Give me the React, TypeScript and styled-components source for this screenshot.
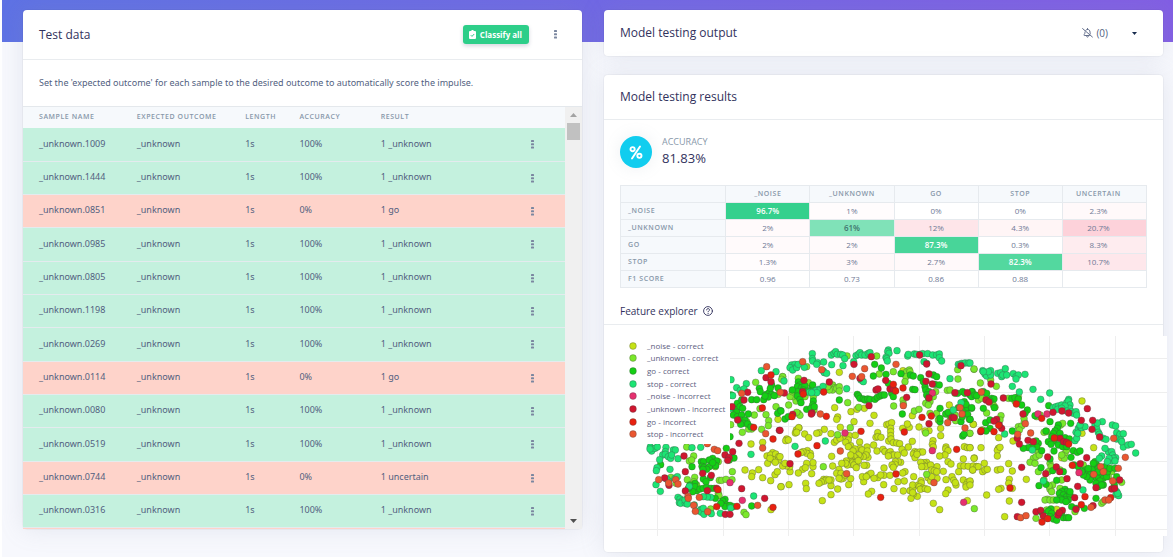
import React from "react";
import styled, { createGlobalStyle, css } from "styled-components";

const Global = createGlobalStyle`
  *, *::before, *::after { box-sizing: border-box; }
  html { background: #fff; }
  body {
    margin: 0;
    font-family: "Open Sans", "Noto Sans", sans-serif;
    font-size: 10px;
    line-height: 16px;
    color: #525f7f;
  }
  button { font: inherit; border: 0; padding: 0; background: none; cursor: pointer; }
  h1, h2, h3, p { margin: 0; }
`;

const Page = styled.main`
  margin-left: 2px;
  min-height: 100vh;
  padding: 10px 10px 5px 21px;
  background: linear-gradient(87deg, #5e72e4, #825ee4) top / 100% 42px no-repeat, #f7f8fd;
  display: grid;
  grid-template-columns: minmax(0, 1fr) minmax(0, 1fr);
  gap: 22px;
  align-items: start;
`;

const Column = styled.div`
  display: flex;
  flex-direction: column;
  gap: 19px;
`;

const Card = styled.section`
  background: #fff;
  border-radius: 4px;
  box-shadow: 0 0 0 1px rgba(0, 0, 0, 0.03), 0 0 24px rgba(136, 152, 170, 0.18);
`;

const CardHeader = styled.header<{ $height: number; $plain?: boolean }>`
  display: flex;
  align-items: center;
  height: ${(p) => p.$height}px;
  padding: 0 16px;
  ${(p) => !p.$plain && css`border-bottom: 1px solid #e9ecef;`}
`;

const Title = styled.h2`
  flex: 1;
  font-size: 12px;
  font-weight: 500;
  color: #32325d;
`;

const ClassifyButton = styled.button`
  display: flex;
  align-items: center;
  gap: 4px;
  height: 19px;
  padding: 0 7px 0 6px;
  border-radius: 3px;
  background: #2dce89;
  color: #fff;
  font-size: 8px;
  font-weight: 700;
  box-shadow: 0 2px 4px rgba(50, 50, 93, 0.2);
`;

const DotsButton = styled.button`
  display: flex;
  align-items: center;
  justify-content: center;
  width: 12px;
  height: 16px;
  color: #7b87a0;
`;

const HeaderDots = styled(DotsButton)`
  margin: 0 5px 0 20px;
`;

const Intro = styled.p`
  height: 46px;
  padding: 0 16px;
  line-height: 46px;
  font-family: "Noto Sans", "Open Sans", sans-serif;
  font-size: 9px;
`;

const SampleArea = styled.div`
  display: flex;
  height: 423px;
  border-top: 1px solid #e4e8ec;
`;

const SampleViewport = styled.div`
  flex: 1;
  min-width: 0;
  overflow-y: auto;
  scrollbar-width: none;
`;

const SampleTable = styled.table`
  width: 100%;
  table-layout: fixed;
  border-collapse: separate;
  border-spacing: 0;
  th, td { padding: 0 0 2px; text-align: left; white-space: nowrap; }
  th:first-child, td:first-child { padding-left: 16px; }
  th {
    height: 21px;
    background: #f6f9fc;
    color: #8898aa;
    font-size: 7px;
    font-weight: 600;
    line-height: 12px;
    letter-spacing: 0.08em;
  }
`;

const SampleRow = styled.tr<{ $ok: boolean }>`
  height: 33px;
  background: ${(p) => (p.$ok ? "#c4f1de" : "#fed3ca")};
  &:nth-child(3n + 1) { height: 34px; }
  td {
    border-bottom: 1px solid #e4ebee;
    font-family: "Noto Sans", "Open Sans", sans-serif;
    font-size: 9px;
  }
  td:last-child { padding-bottom: 0; }
`;

const ScrollTrack = styled.div`
  display: flex;
  flex-direction: column;
  align-items: center;
  width: 17px;
  background: #f0f0f0;
`;

const ScrollArrow = styled.button`
  display: flex;
  align-items: center;
  justify-content: center;
  width: 17px;
  height: 16px;
`;

const ScrollThumb = styled.div`
  flex: 1;
  &::before {
    content: "";
    display: block;
    width: 13px;
    height: 17px;
    background: #c1c1c1;
  }
`;

const BellButton = styled.button`
  display: flex;
  align-items: center;
  gap: 3px;
  font-size: 10px;
  color: #525f7f;
`;

const Caret = styled.button`
  display: flex;
  margin: 0 6px 0 20px;
  padding: 4px;
`;

const Results = styled.div`
  padding: 16px 16px 0;
`;

const Score = styled.div`
  display: flex;
  align-items: center;
  gap: 10px;
  height: 32px;
`;

const ScoreIcon = styled.div`
  display: grid;
  place-items: center;
  width: 32px;
  height: 32px;
  border-radius: 50%;
  background: #11cdef;
  box-shadow: 0 0 16px rgba(136, 152, 170, 0.15);
`;

const ScoreText = styled.div`
  padding-bottom: 2px;
`;

const ScoreLabel = styled.p`
  font-size: 9px;
  line-height: 14px;
  color: #8898aa;
`;

const ScoreValue = styled.p`
  font-size: 13px;
  line-height: 18px;
  font-weight: 500;
  color: #32325d;
`;

const Matrix = styled.table`
  width: 100%;
  margin-top: 17px;
  table-layout: fixed;
  border-collapse: collapse;
  th, td {
    height: 17px;
    padding: 0;
    border: 1px solid #e6eaee;
    font-size: 8px;
    line-height: 12px;
    text-align: center;
  }
  th {
    background: #f6f9fc;
    color: #8898aa;
    font-size: 7px;
    font-weight: 600;
    letter-spacing: 0.08em;
  }
  th[scope="row"] { text-align: left; padding-left: 7px; }
  th:last-child, td:last-child { padding-right: 12px; }
`;

type Tone = { bg?: string; fg?: string; bold?: boolean };

const MatrixCell = styled.td<{ $tone: Tone }>`
  background: ${(p) => p.$tone.bg ?? "#fff"};
  color: ${(p) => p.$tone.fg ?? "#6f7a96"};
  font-weight: ${(p) => (p.$tone.bold ? 600 : 400)};
`;

const ExplorerTitle = styled.h3`
  display: flex;
  align-items: center;
  gap: 5px;
  height: 37px;
  padding: 10px 16px 0;
  border-bottom: 1px solid #e9ecef;
  font-size: 10px;
  font-weight: 500;
  color: #32325d;
`;

const PlotArea = styled.div`
  padding: 11px 0 16px 16px;
  margin-right: -4px;
`;

const Plot = styled.svg`
  display: block;
  width: 100%;
  height: auto;
  background: #fff;
`;

const Dots = () => (
  <svg width="3" height="9" viewBox="0 0 3 9" fill="currentColor" aria-hidden="true">
    <rect width="3" height="2" rx="0.6" />
    <rect y="3.3" width="3" height="2" rx="0.6" />
    <rect y="6.6" width="3" height="2" rx="0.6" />
  </svg>
);

const samples: [string, boolean, string][] = [
  ["1009", true, "_unknown"],
  ["1444", true, "_unknown"],
  ["0851", false, "go"],
  ["0985", true, "_unknown"],
  ["0805", true, "_unknown"],
  ["1198", true, "_unknown"],
  ["0269", true, "_unknown"],
  ["0114", false, "go"],
  ["0080", true, "_unknown"],
  ["0519", true, "_unknown"],
  ["0744", false, "uncertain"],
  ["0316", true, "_unknown"],
];

const classes = ["_NOISE", "_UNKNOWN", "GO", "STOP", "UNCERTAIN"];

const hit = (bg: string): Tone => ({ bg, fg: "#fff", bold: true });
const miss = (bg: string): Tone => ({ bg });

const matrix: { label: string; cells: [string, Tone][] }[] = [
  { label: "_NOISE", cells: [["96.7%", hit("#34d08d")], ["1%", miss("#fffcfd")], ["0%", {}], ["0%", {}], ["2.3%", miss("#fff9fa")]] },
  { label: "_UNKNOWN", cells: [["2%", miss("#fffafb")], ["61%", { bg: "#80e2b8", fg: "#40756f", bold: true }], ["12%", miss("#fee5e9")], ["4.3%", miss("#fff5f6")], ["20.7%", miss("#fdd2da")]] },
  { label: "GO", cells: [["2%", miss("#fffafb")], ["2%", miss("#fffafb")], ["87.3%", hit("#48d599")], ["0.3%", {}], ["8.3%", miss("#feecef")]] },
  { label: "STOP", cells: [["1.3%", miss("#fffcfd")], ["3%", miss("#fff8f9")], ["2.7%", miss("#fff9fa")], ["82.3%", hit("#53d89f")], ["10.7%", miss("#fee7eb")]] },
  { label: "F1 SCORE", cells: [["0.96", {}], ["0.73", {}], ["0.86", {}], ["0.88", {}], ["", {}]] },
];

/* Each series lists its points for the left, middle and right part of the
   plot, in thirds of a pixel from that part's own origin. */
const origins = [-20, 160, 350];

const series: { name: string; color: string; parts: [string, string, string] }[] = [
  {
    name: "_noise - correct",
    color: "#c5e216",
    parts: [
      "534,283 453,357 488,352 518,383 501,393 512,390 527,387 536,395 503,415 520,405 536,405 510,400 526,412 435,435 457,444 455,455 476,434 488,458 525,449 532,440 512,467 543,485 513,554",
      "178,142 369,137 164,248 173,276 170,283 213,260 231,253 253,250 222,290 282,271 270,295 320,299 327,297 335,293 332,310 57,309 49,315 46,324 74,327 86,338 133,313 117,323 110,325 20,342 17,347 25,345 56,308 50,322 153,326 181,307 163,352 170,345 180,340 198,335 208,332 226,331 205,345 197,352 212,362 205,365 239,351 293,323 288,337 294,335 303,337 332,320 332,332 326,348 333,342 340,353 350,354 359,356 281,360 261,366 240,370 246,375 262,378 225,372 219,378 291,378 309,373 315,380 326,385 331,380 335,390 342,390 353,390 325,393 366,373 373,384 385,366 397,349 404,380 400,387 405,398 412,382 420,381 428,381 411,388 368,310 388,307 397,272 417,306 382,297 447,317 482,310 482,332 459,347 457,358 460,366 435,318 498,366 497,372 504,377 495,390 479,393 508,240 553,365 562,368 570,368 580,298 550,402 583,399 541,423 552,423 565,424 590,425 578,435 536,440 504,410 513,417 490,439 516,455 498,464 521,466 528,480 526,473 504,495 497,506 550,465 570,470 563,472 558,480 558,486 562,527 479,554 460,535 412,514 400,507 393,520 390,497 398,490 398,503 398,480 401,455 423,467 415,480 424,474 418,485 428,490 421,493 436,491 443,493 444,458 452,468 471,460 455,455 471,425 440,412 432,413 430,420 422,412 436,425 425,425 452,420 455,435 463,437 470,440 362,412 355,410 346,410 345,418 336,420 340,427 312,429 312,451 330,451 311,479 342,491 370,498 354,470 373,468 375,440 368,444 294,458 302,450 275,499 265,507 251,470 247,455 265,450 273,445 259,455 282,460 264,397 258,390 250,395 240,395 236,390 228,400 222,395 213,400 215,410 212,418 218,413 228,412 229,420 222,420 229,428 235,407 260,421 252,421 199,408 212,390 155,394 177,433 170,445 183,445 190,460 183,462 177,460 196,450 212,461 206,479 202,420 197,415 185,415 173,492 153,509 153,482 153,465 158,423 127,527 131,463 139,463 134,468 147,465 124,471 117,475 77,475 79,491 95,446 99,425 99,413 80,415 68,433 76,428 55,444 27,479 3,485 30,440 29,425 20,423 8,423 15,415 0,395 82,377 91,385 80,385 92,393 69,380 63,383",
      "10,298 86,338 33,368 0,368 12,400 85,370 82,376 90,367 82,393 43,415 10,423 20,425 25,425 8,435 38,440 45,435 52,433 82,435 92,433 116,416 127,438 118,463 116,475 127,490 93,490 86,493 50,510 118,528 0,468 0,480 169,463 104,575 371,368 336,325 336,228 129,348 260,553 275,398",
    ],
  },
  {
    name: "_unknown - correct",
    color: "#7ae82a",
    parts: [
      "467,172 548,155 392,299 480,251 463,270 498,269 506,287 505,302 485,313 427,322 440,290 455,312 411,252 528,245 446,312 535,208 281,393 268,408 260,366 397,440 396,464 358,466 365,466 378,463 262,464 284,457 282,470 355,410 213,457 346,425 275,405 355,505 432,562 438,569 332,552 357,512 290,480 228,475",
      "8,155 5,163 85,173 26,240 48,228 38,215 30,215 37,200 55,265 60,271 50,262 80,125 201,93 290,93 260,90 158,180 165,188 158,195 170,190 148,195 143,185 178,185 178,198 203,233 236,247 102,255 75,215 100,215 298,147 369,225 370,237 341,243 375,148 380,140 388,135 390,140 378,155 375,170 340,140 403,258 417,253 437,235 450,230 460,215 445,240 470,265 467,200 502,196 510,195 534,162 533,134 582,133 525,205 525,270 527,287 558,263 568,283 569,325 437,324 173,329 211,308 130,425 440,448 583,551 475,285 510,275 55,160 450,265",
      "31,174 79,184 62,165 25,225 35,220 50,220 115,220 70,240 75,247 50,264 93,272 37,315 90,285 145,305 155,303 163,290 148,315 145,215 135,228 200,275 222,322 230,320 272,300 278,295 285,385 290,375 283,400 275,390 200,370 205,380 190,400 180,412 195,415 198,395 208,390 240,415 243,425 235,440 248,480 240,493 237,483 245,500 232,523 225,525 240,525 250,525 198,580 395,535 400,530 455,472 315,560 230,555 205,440 270,490 340,420 270,435 425,440 415,455 437,465 275,465 210,270 222,465 0,325 162,280 12,132",
    ],
  },
  {
    name: "go - correct",
    color: "#14cf14",
    parts: [
      "393,210 400,250 412,235 425,225 420,245 428,250 410,262 400,270 412,275 425,270 420,285 435,285 445,267 430,295 422,298 443,297 453,306 455,224 470,224 478,190 481,200 491,224 499,208 508,202 515,208 505,216 523,212 495,213 534,189 515,180 511,190 541,257 533,265 390,335 379,370 182,419 276,425 304,410 311,410 306,424 312,427 338,400 328,405 350,408 335,420 347,422 328,425 320,433 309,433 338,413 402,399 310,462 331,458 285,475 270,480 275,490 290,497 285,485 300,492 310,490 320,487 333,490 343,490 278,500 265,490 375,523 368,528 380,540 375,545 390,541 455,543 400,545 362,535 346,520 388,405 318,470",
      "3,258 15,282 25,275 55,171 60,180 52,185 65,188 75,183 53,200 70,195 80,200 52,213 60,223 63,233 95,190 98,180 100,228 98,240 80,253 93,250 103,245 37,195 178,225 232,208 236,213 240,220 250,222 255,225 263,222 270,223 285,223 292,217 300,213 306,210 313,210 280,153 284,118 304,129 318,148 325,175 335,205 363,146 367,267 391,150 400,153 398,193 405,194 422,158 435,185 437,195 447,200 440,210 450,208 445,218 460,150 470,155 465,178 478,180 430,170 480,250 480,290 480,280 497,267 513,273 505,262 535,248 555,250 563,248 575,250 553,230 558,238 570,283 563,268 543,290 548,333 552,328 533,205 548,200 555,205 577,200 570,210 340,215 547,275",
      "5,200 5,215 15,210 20,212 40,200 50,205 65,220 72,222 60,228 40,250 73,248 5,248 0,283 47,293 60,285 60,310 48,318 127,318 125,220 135,218 145,222 155,240 172,255 165,265 195,272 236,242 228,318 240,290 265,300 262,310 255,318 250,325 270,325 245,335 260,340 275,340 285,338 250,348 235,350 243,358 265,360 278,365 290,365 302,295 298,342 252,378 215,377 205,355 200,365 185,365 175,368 160,370 198,348 310,377 322,382 330,378 303,397 312,420 240,402 248,437 213,428 280,440 325,425 345,435 350,440 355,445 365,440 360,450 370,430 380,420 370,455 380,460 385,455 385,430 395,445 400,460 390,468 378,475 375,410 370,415 405,425 400,480 410,455 385,440 413,440 420,430 435,430 440,455 360,465 355,430 350,455 340,450 335,440 260,466 207,482 228,478 285,493 290,500 275,500 268,505 280,510 290,515 300,510 295,525 285,525 270,520 300,500 275,525 288,530 305,545 260,525 378,520 343,550 318,550 243,552 235,558 245,565 240,575 250,582 260,586 280,578 290,578 296,578 275,562 215,562 385,485 395,480 433,480",
    ],
  },
  {
    name: "stop - correct",
    color: "#1ce574",
    parts: [
      "484,137 528,140 393,164 439,176 410,188 421,196 432,192 398,212 390,250 151,366 158,372 155,378 165,370 172,366 150,372 198,367 220,375 196,380 226,375 188,390 196,388 205,395 212,400 215,390 234,401 179,404 171,428 169,437 210,433 276,368 302,367 168,479 181,499 206,468 200,462 225,460 232,455 268,484 234,517 240,522 238,533 248,527 242,535 256,535 260,530 255,525 262,537 283,540 303,553 298,558 305,562 312,568 334,566 310,550 332,517 322,516 310,515 361,565 392,549 453,388 461,513",
      "35,120 45,118 40,130 30,128 38,135 50,128 55,118 73,127 97,86 97,101 98,108 113,113 110,118 131,111 155,119 154,90 162,85 167,80 172,88 182,88 188,90 194,101 189,122 200,191 228,92 235,88 240,83 245,90 255,90 265,85 270,83 221,110 325,75 323,80 327,85 351,77 318,97 320,101 322,108 383,93 385,88 403,87 410,88 420,88 428,86 443,86 458,90 470,90 478,87 478,98 485,108 432,110 440,115 130,138 133,143 140,145 12,168 88,202 100,200 115,193 108,197 120,195 129,184 110,203 95,203 243,165 250,170 45,364 136,348 510,161 535,118 545,115 555,114 565,114 540,120 543,233 520,255",
      "0,114 38,137 45,148 50,153 62,137 62,150 55,140 40,140 83,145 92,143 106,131 95,155 98,150 110,150 130,146 138,155 145,150 138,162 165,148 127,184 148,201 189,193 239,204 212,223 250,248 258,245 265,243 263,253 275,240 290,233 296,223 295,228 300,240 298,250 285,243 305,260 310,265 318,260 320,270 290,258 275,250 187,375 104,327 220,468 315,347 320,340 318,322 325,310 330,305 335,308 345,305 323,325 330,300 375,300 380,310 385,322 397,290 427,300 437,303 388,328 400,340 408,343 440,323 447,335 450,328 460,326 440,342 453,345 460,366 455,350 474,360 484,358 497,384 415,380 425,380 428,390 437,398 430,400 425,408 405,370 395,393 388,400 417,400 412,410 435,408 440,500 438,508 446,512 339,495 443,505 382,294",
    ],
  },
  {
    name: "_noise - incorrect",
    color: "#e6306f",
    parts: ["390,473 427,526", "195,324 457,204 457,377 551,532", "204,267 231,267 327,443"],
  },
  {
    name: "_unknown - incorrect",
    color: "#d0162f",
    parts: [
      "498,158 513,170 443,202 432,225 396,245 413,285 538,316 417,355 398,380 375,390 387,397 383,406 252,393 256,440 308,445 334,451 194,459 207,481 256,498 322,497 425,491 494,520 376,568 390,568 350,490",
      "222,118 274,95 419,90 440,117 447,147 438,169 457,177 543,122 525,203 562,203 447,219 447,296 317,166 380,217 267,242 288,195 294,192 330,192 340,192 240,160 148,171 72,166 68,200 13,204 38,268 96,264 94,267 30,416 0,316 516,278 522,278",
      "63,177 48,225 57,231 100,219 159,267 249,262 276,258 296,264 352,251 334,286 368,286 366,313 389,336 80,283 72,288 95,310 32,320 142,340 148,357 174,346 190,350 233,396 227,446 259,426 269,440 291,461 331,416 350,398 323,484 378,488 155,427 155,532 142,575 198,560 212,556 220,573 264,570 277,556 268,563 318,553 314,518 449,465 425,492 434,490 369,542 270,340 281,350 290,352 88,300",
    ],
  },
  {
    name: "go - incorrect",
    color: "#e8200f",
    parts: [
      "513,150 487,249 461,307 519,342 354,494 350,545 411,544 519,547",
      "131,201 70,207 36,275 139,274 54,387 111,362 243,319 373,321 369,189 340,178 347,198 426,277 454,273 348,447 302,517 530,373",
      "139,237 215,280 86,301 72,320 33,317 253,339 296,357 307,421 120,489 345,515 334,539 422,518 216,591 233,581",
    ],
  },
  {
    name: "stop - incorrect",
    color: "#ea5630",
    parts: [
      "500,125 425,205 541,202 497,326 488,369 322,356 343,373 353,377 176,464 206,474 227,464 234,477 264,514 265,520 298,517 281,541 286,559 323,560 473,541",
      "68,110 125,134 254,131 348,118 217,154 245,155 121,267 370,242 503,293 540,248 546,267 555,309 181,378 200,446 462,473",
      "34,201 166,296 143,328 182,324 431,340 466,397 445,430 392,425 400,440 371,448 428,468 152,578 168,572 363,547 405,525 416,525",
    ],
  },
];

const parse = (part: string, origin: number) =>
  part.split(" ").map((pair) => {
    const [x, y] = pair.split(",").map(Number);
    return { x: origin + x / 3, y: y / 3 - 11 };
  });

const gridX = [37, 103, 168, 233, 299, 364, 429, 495];
const gridY = [22, 56, 90, 125, 159, 193];
const legendY = [10, 22, 35, 48, 60, 73, 86, 98];

const marker = { stroke: "#444", strokeOpacity: 0.55, strokeWidth: 0.6 };

const FeaturePlot = () => (
  <Plot viewBox="0 0 547 200" role="img" aria-label="Feature explorer">
    <g stroke="#eeeeee" strokeWidth="1">
      {gridX.map((x) => <line key={x} x1={x + 0.5} x2={x + 0.5} y1="0" y2="200" />)}
      {gridY.map((y) => <line key={y} x1="0" x2="547" y1={y + 0.5} y2={y + 0.5} />)}
    </g>
    {series.map((s) => (
      <g key={s.name} fill={s.color} {...marker}>
        {s.parts.flatMap((part, i) =>
          parse(part, origins[i]).map((p, j) => <circle key={`${i}-${j}`} cx={p.x} cy={p.y} r="3.4" />)
        )}
      </g>
    ))}
    <rect width="110" height="108" fill="#fff" />
    {series.map((s, i) => (
      <g key={s.name}>
        <circle cx="13" cy={legendY[i]} r="3.4" fill={s.color} {...marker} />
        <text x="27" y={legendY[i] + 3} fontSize="8" fill="#5c6080">{s.name}</text>
      </g>
    ))}
  </Plot>
);

export default function App() {
  return (
    <>
      <Global />
      <Page>
        <Card>
          <CardHeader $height={50}>
            <Title>Test data</Title>
            <ClassifyButton>
              <svg width="7" height="9" viewBox="0 0 7 9" aria-hidden="true">
                <path d="M1 1h1.3a1.2 1.2 0 0 1 2.4 0H6a1 1 0 0 1 1 1v6a1 1 0 0 1-1 1H1a1 1 0 0 1-1-1V2a1 1 0 0 1 1-1z" fill="#fff" />
                <path d="M1.8 5.2l1.2 1.2 2.2-2.4" fill="none" stroke="#2dce89" strokeWidth="1" />
              </svg>
              Classify all
            </ClassifyButton>
            <HeaderDots aria-label="More options"><Dots /></HeaderDots>
          </CardHeader>
          <Intro>
            Set the 'expected outcome' for each sample to the desired outcome to automatically score the impulse.
          </Intro>
          <SampleArea>
            <SampleViewport>
              <SampleTable>
                <colgroup>
                  <col style={{ width: "21%" }} />
                  <col style={{ width: "20%" }} />
                  <col style={{ width: "10%" }} />
                  <col style={{ width: "15%" }} />
                  <col />
                  <col style={{ width: "39px" }} />
                </colgroup>
                <thead>
                  <tr>
                    <th>SAMPLE NAME</th>
                    <th>EXPECTED OUTCOME</th>
                    <th>LENGTH</th>
                    <th>ACCURACY</th>
                    <th>RESULT</th>
                    <th aria-label="Actions" />
                  </tr>
                </thead>
                <tbody>
                  {samples.map(([id, ok, result]) => (
                    <SampleRow key={id} $ok={ok}>
                      <td>_unknown.{id}</td>
                      <td>_unknown</td>
                      <td>1s</td>
                      <td>{ok ? "100%" : "0%"}</td>
                      <td>1 {result}</td>
                      <td><DotsButton aria-label={`Options for _unknown.${id}`}><Dots /></DotsButton></td>
                    </SampleRow>
                  ))}
                  <SampleRow $ok={false}><td colSpan={6} /></SampleRow>
                </tbody>
              </SampleTable>
            </SampleViewport>
            <ScrollTrack>
              <ScrollArrow aria-label="Scroll up">
                <svg width="7" height="4" viewBox="0 0 7 4"><path d="M0 4L3.5 0 7 4z" fill="#a3a3a3" /></svg>
              </ScrollArrow>
              <ScrollThumb />
              <ScrollArrow aria-label="Scroll down">
                <svg width="7" height="4" viewBox="0 0 7 4"><path d="M0 0L3.5 4 7 0z" fill="#505050" /></svg>
              </ScrollArrow>
            </ScrollTrack>
          </SampleArea>
        </Card>
        <Column>
          <Card>
            <CardHeader $height={46} $plain>
              <Title>Model testing output</Title>
              <BellButton>
                <svg width="11" height="10" viewBox="0 0 11 10" fill="none" stroke="currentColor" strokeWidth="0.9" strokeLinecap="round" aria-hidden="true">
                  <path d="M0.6 0.6l9.8 8.4" />
                  <path d="M3.8 2.3C4.2 1.7 4.8 1.4 5.5 1.4c1.5 0 2.5 1.1 2.5 2.6 0 .8.1 1.4.3 1.9M5.5.5v.9M3 4c0 1.500-.5 2.200-1 2.800-.2.300 0 .7.400.7h5M4.600 8.600c.300.800 1.500.800 1.800 0" />
                </svg>
                (0)
              </BellButton>
              <Caret aria-label="Expand output">
                <svg width="5" height="3" viewBox="0 0 5 3"><path d="M0 0h5L2.5 3z" fill="#172b4d" /></svg>
              </Caret>
            </CardHeader>
          </Card>
          <Card>
            <CardHeader $height={45}>
              <Title>Model testing results</Title>
            </CardHeader>
            <Results>
              <Score>
                <ScoreIcon>
                  <svg width="14" height="15" viewBox="0 0 14 15" fill="none" stroke="#fff" strokeWidth="1.9" strokeLinecap="round" aria-hidden="true">
                    <circle cx="3.6" cy="4.2" r="2.1" />
                    <circle cx="10.4" cy="10.8" r="2.1" />
                    <path d="M11 1.5L3 13.5" />
                  </svg>
                </ScoreIcon>
                <ScoreText>
                  <ScoreLabel>ACCURACY</ScoreLabel>
                  <ScoreValue>81.83%</ScoreValue>
                </ScoreText>
              </Score>
              <Matrix>
                <colgroup>
                  <col style={{ width: "20%" }} />
                  {classes.map((c) => <col key={c} style={{ width: "16%" }} />)}
                </colgroup>
                <thead>
                  <tr>
                    <th aria-label="Expected class" />
                    {classes.map((c) => <th key={c} scope="col">{c}</th>)}
                  </tr>
                </thead>
                <tbody>
                  {matrix.map((row) => (
                    <tr key={row.label}>
                      <th scope="row">{row.label}</th>
                      {row.cells.map(([value, tone], i) => (
                        <MatrixCell key={i} $tone={tone}>{value}</MatrixCell>
                      ))}
                    </tr>
                  ))}
                </tbody>
              </Matrix>
            </Results>
            <ExplorerTitle>
              Feature explorer
              <svg width="10" height="10" viewBox="0 0 10 10" fill="none" stroke="currentColor" strokeLinecap="round" aria-hidden="true">
                <circle cx="5" cy="5" r="4.4" strokeWidth="0.9" />
                <path d="M3.6 3.9c0-1.9 2.9-1.7 2.9 0 0 1-1.4 1-1.4 1.9M5.1 7.4v.1" strokeWidth="1" />
              </svg>
            </ExplorerTitle>
            <PlotArea>
              <FeaturePlot />
            </PlotArea>
          </Card>
        </Column>
      </Page>
    </>
  );
}
